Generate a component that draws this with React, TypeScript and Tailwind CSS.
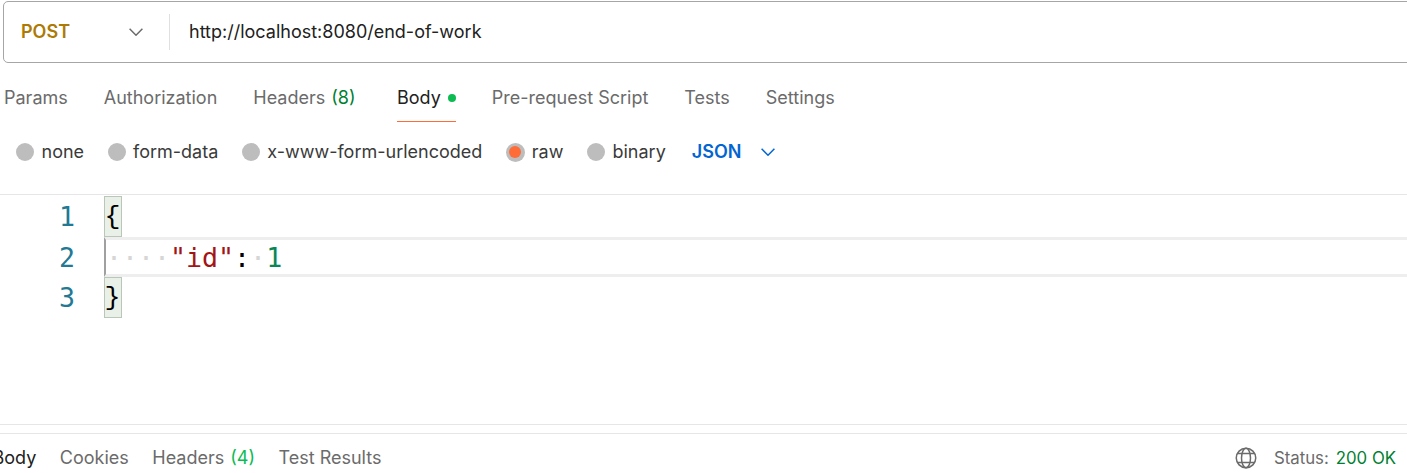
import React from "react";

const Chevron = ({ className }: { className: string }) => (
  <svg viewBox="0 0 14 8" fill="none" stroke="currentColor" strokeWidth="1.5" className={className}>
    <path d="M0.6 0.8l6.4 6.4 6.4-6.4" />
  </svg>
);

const Radio = ({ label, active }: { label: string; active?: boolean }) => (
  <div className={active ? "flex items-center gap-[7px]" : "flex items-center gap-[7.5px]"}>
    {active ? (
      <span className="flex h-[19px] w-[19px] items-center justify-center rounded-full bg-[#bdbdbd]">
        <span className="h-[12px] w-[12px] rounded-full bg-[#ff6c37]" />
      </span>
    ) : (
      <span className="h-[18px] w-[18px] rounded-full bg-[#bdbdbd]" />
    )}
    <span className="text-[#3a3a3a]">{label}</span>
  </div>
);

export default function App() {
  return (
    <div className="flex h-[473px] w-[1407px] flex-col overflow-hidden bg-white font-['Inter',sans-serif] text-[18px] leading-[24px]">
      <div className="pl-[3px] pt-[1px]">
        <div className="flex h-[62px] w-[1420px] items-center rounded-[5px] border border-[#a6a6a6]">
          <span className="w-[125px] pl-[17px] font-semibold text-[#ad7a03]">POST</span>
          <Chevron className="h-[8px] w-[14px] text-[#6b6b6b]" />
          <span className="ml-[26px] h-[36px] w-px bg-[#e0e0e0]" />
          <span className="ml-[19px] text-[#212121]">http://localhost:8080/end-of-work</span>
        </div>
      </div>

      <div className="flex h-[59px] pl-[4px] text-[#6b6b6b]">
        <div className="flex h-full items-center pt-[11px]">Params</div>
        <div className="ml-[36px] flex h-full items-center pt-[11px]">Authorization</div>
        <div className="ml-[36px] flex h-full items-center pt-[11px]">
          Headers<span className="ml-[6px] text-[#007f31]">(8)</span>
        </div>
        <div className="ml-[41.5px] flex h-full items-center border-b border-[#ff6c37] pt-[11px] text-[#212121]">
          Body
          <span className="ml-[7px] h-[8px] w-[8px] rounded-full bg-[#0cbb52]" />
        </div>
        <div className="ml-[36px] flex h-full items-center pt-[11px]">Pre-request Script</div>
        <div className="ml-[36px] flex h-full items-center pt-[11px]">Tests</div>
        <div className="ml-[36px] flex h-full items-center pt-[11px]">Settings</div>
      </div>

      <div className="flex h-[72px] items-center pb-[12px] pl-[16px]">
        <div className="flex items-center gap-[23.5px]">
          <Radio label="none" />
          <Radio label="form-data" />
          <Radio label="x-www-form-urlencoded" />
          <Radio label="raw" active />
          <Radio label="binary" />
        </div>
        <span className="ml-[26px] font-semibold text-[#0265d2]">JSON</span>
        <Chevron className="ml-[20px] h-[8px] w-[14px] text-[#0265d2]" />
      </div>

      <div className="flex h-[230px] border-t border-[#e6e6e6] pt-[1px] font-['DejaVu_Sans_Mono',monospace] text-[26.6px] leading-[42px]">
        <div className="w-[75px] text-right text-[#237893]">
          <div className="h-[41px]">1</div>
          <div className="h-[41px]">2</div>
          <div className="h-[40px] leading-[40px]">3</div>
        </div>
        <div className="ml-[29px] flex-1 text-black">
          <div className="h-[41px] w-[18px] border border-[#b9c6b9] bg-[#e8f0e8] text-center font-['Liberation_Mono',monospace] leading-[40px]">
            <span className="-ml-[1px]">{"{"}</span>
          </div>
          <div className="flex h-[40px] items-center whitespace-pre border-y-[3px] border-l-2 border-y-[#eeeeee] border-l-[#a0a0a0] pt-[2px]">
            <span className="text-[#d6d6d6]">····</span>
            <span className="text-[#a31515]">"id"</span>
            <span>:</span>
            <span className="text-[#d6d6d6]">·</span>
            <span className="text-[#098658]">1</span>
          </div>
          <div className="h-[41px] w-[18px] border border-[#b9c6b9] bg-[#e8f0e8] text-center font-['Liberation_Mono',monospace] leading-[40px]">
            <span className="-ml-[1px]">{"}"}</span>
          </div>
        </div>
      </div>

      <div className="h-[9px] border-t border-[#e6e6e6]" />

      <div className="flex flex-1 items-center justify-between border-t border-[#e6e6e6] pt-[9px] text-[#6b6b6b]">
        <div className="-ml-[7.5px] flex items-center gap-[23.5px]">
          <span className="text-[#212121]">Body</span>
          <span>Cookies</span>
          <span>
            Headers<span className="ml-[6px] text-[#0cbb52]">(4)</span>
          </span>
          <span>Test Results</span>
        </div>
        <div className="flex items-center pr-[11px] text-[16.8px]">
          <svg viewBox="0 0 22 22" fill="none" stroke="#6b6b6b" strokeWidth="1.5" className="mr-[-1px] h-[22px] w-[22px]">
            <circle cx="11" cy="11" r="9.75" />
            <ellipse cx="11" cy="11" rx="4.5" ry="9.75" />
            <path d="M2.5 6.5h17M2.5 15.5h17" />
          </svg>
          <span className="ml-[18px]">Status:</span>
          <span className="ml-[7px] text-[#007f31]">200 OK</span>
        </div>
      </div>
    </div>
  );
}
